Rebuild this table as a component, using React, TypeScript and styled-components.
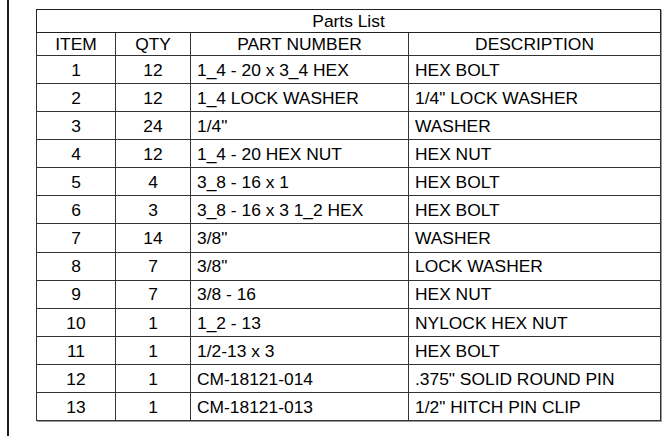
import styled, { createGlobalStyle } from 'styled-components';

const GlobalStyle = createGlobalStyle`
  html, body {
    margin: 0;
    padding: 0;
    background: #ffffff;
  }
  body {
    font-family: "Liberation Sans", Arial, sans-serif;
    color: #000;
  }
`;

const Page = styled.div`
  width: 665px;
  height: 436px;
  padding-left: 7px;
  box-sizing: border-box;
  overflow: hidden;
`;

const Sheet = styled.div`
  height: 436px;
  border-left: 2px solid #1e1e1e;
  box-sizing: border-box;
  padding: 9px 0 0 27px;
`;

const Table = styled.table`
  border-collapse: collapse;
  table-layout: fixed;
  width: 625px;
  font-size: 17.4px;
  line-height: 1;
  border: 1px solid #222;
  box-shadow: 1px 1px 0 #9a9a9a;
`;

const Title = styled.th`
  height: 21px;
  padding: 1px 0 0;
  font-weight: normal;
  text-align: center;
  border: 1px solid #222;
  vertical-align: middle;
`;

const Head = styled.th`
  height: 21px;
  padding: 1px 0 0;
  font-weight: normal;
  text-align: center;
  border: 1px solid #333;
  vertical-align: middle;
`;

const Cell = styled.td<{ $align?: 'left' | 'center' }>`
  height: 25.08px;
  padding: 2px 0 0 ${(p) => (p.$align === 'left' ? '6px' : '0')};
  text-align: ${(p) => p.$align || 'center'};
  border: 1px solid #333;
  vertical-align: middle;
  white-space: nowrap;
`;

const parts = [
  ['1', '12', '1_4 - 20 x 3_4 HEX', 'HEX BOLT'],
  ['2', '12', '1_4 LOCK WASHER', '1/4" LOCK WASHER'],
  ['3', '24', '1/4"', 'WASHER'],
  ['4', '12', '1_4 - 20 HEX NUT', 'HEX NUT'],
  ['5', '4', '3_8 - 16 x 1', 'HEX BOLT'],
  ['6', '3', '3_8 - 16 x 3 1_2 HEX', 'HEX BOLT'],
  ['7', '14', '3/8"', 'WASHER'],
  ['8', '7', '3/8"', 'LOCK WASHER'],
  ['9', '7', '3/8 - 16', 'HEX NUT'],
  ['10', '1', '1_2 - 13', 'NYLOCK HEX NUT'],
  ['11', '1', '1/2-13 x 3', 'HEX BOLT'],
  ['12', '1', 'CM-18121-014', '.375" SOLID ROUND PIN'],
  ['13', '1', 'CM-18121-013', '1/2" HITCH PIN CLIP'],
];

const App = () => {
  return (
    <>
      <GlobalStyle />
      <Page>
        <Sheet>
          <Table>
            <colgroup>
              <col style={{ width: 79 }} />
              <col style={{ width: 75 }} />
              <col style={{ width: 218 }} />
              <col style={{ width: 252 }} />
            </colgroup>
            <thead>
              <tr>
                <Title colSpan={4}>Parts List</Title>
              </tr>
              <tr>
                <Head>ITEM</Head>
                <Head>QTY</Head>
                <Head>PART NUMBER</Head>
                <Head>DESCRIPTION</Head>
              </tr>
            </thead>
            <tbody>
              {parts.map((row, i) => (
                <tr key={`part_${i}`}>
                  <Cell>{row[0]}</Cell>
                  <Cell>{row[1]}</Cell>
                  <Cell $align="left">{row[2]}</Cell>
                  <Cell $align="left">{row[3]}</Cell>
                </tr>
              ))}
            </tbody>
          </Table>
        </Sheet>
      </Page>
    </>
  );
};

export default App;
